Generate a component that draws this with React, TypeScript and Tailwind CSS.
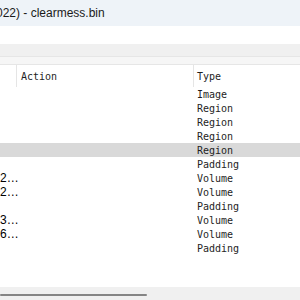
import React from 'react'

type Row = { name: string; type: string; hl?: boolean }

const rows: Row[] = [
    { name: '', type: 'Image' },
    { name: '', type: 'Region' },
    { name: '', type: 'Region' },
    { name: '', type: 'Region' },
    { name: '', type: 'Region', hl: true },
    { name: '', type: 'Padding' },
    { name: '2…', type: 'Volume' },
    { name: '2…', type: 'Volume' },
    { name: '', type: 'Padding' },
    { name: '3…', type: 'Volume' },
    { name: '6…', type: 'Volume' },
    { name: '', type: 'Padding' },
]

export default function App() {
    return (
        <div className="w-[300px] h-[300px] overflow-hidden bg-white flex flex-col">
            <div className="h-[26px] shrink-0 bg-[#eef3f8] flex items-center text-[12px] text-[#1a1a1a] font-['Liberation_Sans',sans-serif] whitespace-nowrap overflow-hidden">
                <span className="-ml-[4px]">022) - clearmess.bin</span>
            </div>
            <div className="h-[18px] shrink-0 bg-white" />
            <div className="h-[12px] shrink-0 bg-[#f0f0f0]" />
            <div className="h-[9px] shrink-0 bg-[#f6f6f6] border-t border-b border-[#e6e6e6]" />
            <div className="flex flex-col font-['DejaVu_Sans_Mono',monospace] text-[10px] text-[#1e1e1e]">
                <div className="h-[22px] flex items-center">
                    <div className="w-[16px] h-full" />
                    <div className="w-[177px] h-full border-l border-[#e5e5e5] flex items-center pl-[4px]">Action</div>
                    <div className="flex-1 h-full border-l border-[#e5e5e5] flex items-center pl-[3px]">Type</div>
                </div>
                {rows.map((r, i) => (
                    <div key={i} className={`h-[14px] flex items-center ${r.hl ? 'bg-[#d9d9d9]' : ''}`}>
                        <div className="w-[17px] whitespace-nowrap font-['Liberation_Sans',sans-serif] text-[12px] text-black">{r.name}</div>
                        <div className="w-[177px]" />
                        <div className="flex-1 pl-[3px]">{r.type}</div>
                    </div>
                ))}
            </div>
            <div className="flex-1" />
            <div className="h-[13px] shrink-0 bg-[#f0f0f0] flex items-center">
                <div className="w-[147px] h-[2px] rounded-full bg-[#858585] mt-[2px]" />
            </div>
        </div>
    )
}
